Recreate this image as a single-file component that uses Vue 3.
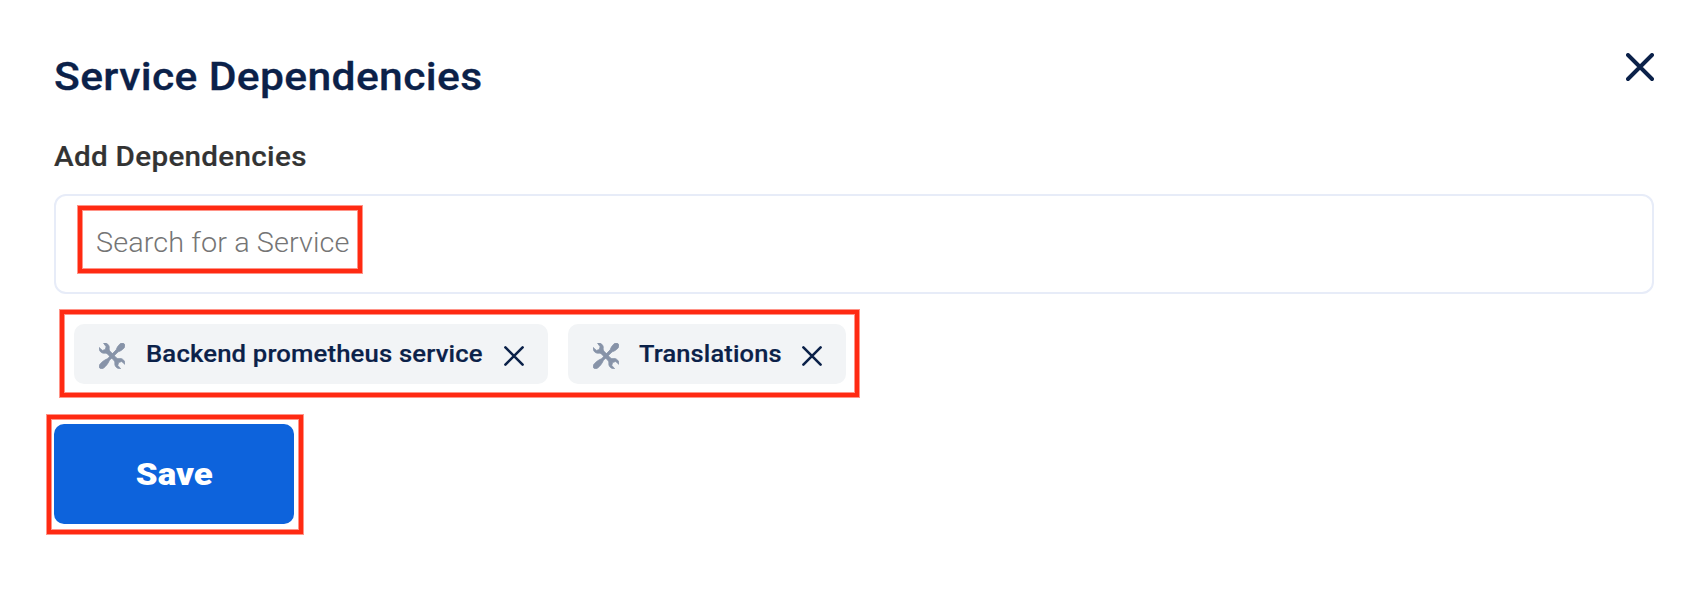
<script setup>
const services = [
  { name: 'Backend prometheus service', cls: 'backend' },
  { name: 'Translations', cls: 'translations' },
]
</script>

<template>
  <main class="dialog">
    <header class="head">
      <h1><span>Service Dependencies</span></h1>
      <button class="close" aria-label="Close">
        <svg width="28" height="28" viewBox="0 0 28 28"><path d="M2 2 26 26M26 2 2 26" /></svg>
      </button>
    </header>
    <label class="label"><span>Add Dependencies</span></label>
    <div class="search">
      <span class="placeholder">Search for a Service</span>
      <i class="mark mark-search"></i>
    </div>
    <div class="chips">
      <div v-for="s in services" :key="s.name" class="chip" :class="s.cls">
        <svg class="tools" width="26" height="26" viewBox="0 0 26 26">
          <path d="M4.6.2C7.6-.5 10.7 2 10.2 5.2 10 6.6 10.4 7.6 11.4 8.6L17.3 14.8C18.4 15.8 19.2 15.6 20.6 15.5 23.8 15.2 26.3 18.2 25.9 21.3L22.7 18.5 19.6 19.5 18.8 22.4 21.6 25.7C18.4 26 15.7 23.7 15.8 20.6 15.8 19.2 15.9 18.3 14.8 17.2L8.6 11.2C7.6 10.2 6.8 10 5.3 10.2 2.2 10.5-.2 7.6.1 4.5L3.4 7.4 6.3 6.6 7.1 3.7Z" />
          <path d="M25.1.8C26.4 2.1 26.1 4 24.7 5.4 23.2 6.9 21.2 8.3 19.2 8.8L10.3 17.4C9.7 19.8 7.3 22.7 5 24.7 3.6 26 1.8 26.1.8 25.1-.2 24-.1 22.3 1.2 20.9 3.1 18.8 6.2 16.4 8.5 15.8L17.2 6.8C17.8 4.8 19 2.9 20.6 1.3 22-.1 23.8-.5 25.1.8Z" />
        </svg>
        <span class="name">{{ s.name }}</span>
        <svg class="remove" width="20" height="20" viewBox="0 0 20 20"><path d="M1.4 1.4 18.6 18.6M18.6 1.4 1.4 18.6" /></svg>
      </div>
      <i class="mark mark-chips"></i>
    </div>
    <button class="save"><span>Save</span><i class="mark mark-save"></i></button>
  </main>
</template>

<style>
body { background: #fff; }
</style>

<style scoped>
.dialog {
  box-sizing: border-box;
  width: 1708px;
  height: 604px;
  padding: 52px 54px 0;
  font-family: Roboto, "Liberation Sans", sans-serif;
  background: #fff;
  color: #0b2149;
  overflow: hidden;
}
.head { display: flex; justify-content: space-between; height: 80px; }
h1 {
  margin: 1px 0 0;
  font-size: 39.5px;
  line-height: 48px;
  font-weight: 500;
  letter-spacing: .35px;
  white-space: nowrap;
  transform: scaleX(1.078);
  transform-origin: left;
  -webkit-text-stroke: .3px currentColor;
}
button { border: 0; padding: 0; font-family: inherit; }
.close { width: 28px; height: 28px; margin-top: 1px; background: none; }
.close svg { display: block; }
.close path { fill: none; stroke: #0b2149; stroke-width: 3.9; stroke-linecap: round; }
.label {
  display: block;
  width: max-content;
  height: 62px;
  font-size: 27.7px;
  line-height: 49px;
  font-weight: 500;
  letter-spacing: .3px;
  color: #333;
  white-space: nowrap;
  transform: scaleX(1.069);
  transform-origin: left;
  -webkit-text-stroke: .2px currentColor;
}
.search {
  position: relative;
  box-sizing: border-box;
  height: 100px;
  border: 2px solid #e7ecf8;
  border-radius: 12px;
  padding-left: 40px;
  display: flex;
  align-items: center;
}
.placeholder { font-size: 28px; font-weight: 300; letter-spacing: .09px; color: #757575; line-height: 36px; margin-bottom: 2px; transform: scaleX(1.03); transform-origin: left; }
.chips { position: relative; display: flex; gap: 20px; padding: 30px 20px 40px; width: max-content; }
.chip {
  box-sizing: border-box;
  display: flex;
  align-items: center;
  height: 60px;
  padding: 0 24px 0 25px;
  border-radius: 10px;
  background: #f2f4f6;
}
.backend { width: 474px; }
.translations { width: 278px; }
.tools { fill: #8793a8; stroke: #8793a8; stroke-width: .8; flex: none; margin-top: 4px; }
.name { margin-left: 21px; font-size: 23.8px; font-weight: 500; line-height: 32px; letter-spacing: .15px; white-space: nowrap; transform: scaleX(1.079); transform-origin: left; -webkit-text-stroke: .2px currentColor; }
.translations .name { margin-left: 20px; transform: scaleX(1.068); }
.remove { flex: none; margin-left: auto; margin-top: 4px; fill: none; stroke: #0b2149; stroke-width: 2.6; stroke-linecap: round; }
.save {
  position: relative;
  display: flex;
  align-items: center;
  justify-content: center;
  width: 240px;
  height: 100px;
  border-radius: 10px;
  background: #0d63dc;
  color: #fff;
  font-size: 32px;
  font-weight: 900;
}
.save span { transform: scaleX(1.09); }
.mark {
  position: absolute;
  box-sizing: border-box;
  border: 4px solid #ff2a12;
  box-shadow: 0 0 0 1px rgba(255, 42, 18, .5), inset 0 0 0 1px rgba(255, 42, 18, .5);
  pointer-events: none;
}
.mark-search { left: 22px; top: 10px; width: 284px; height: 67px; }
.mark-chips { left: 6px; top: 16px; width: 799px; height: 87px; }
.mark-save { left: -7px; top: -9px; width: 256px; height: 119px; }
</style>
